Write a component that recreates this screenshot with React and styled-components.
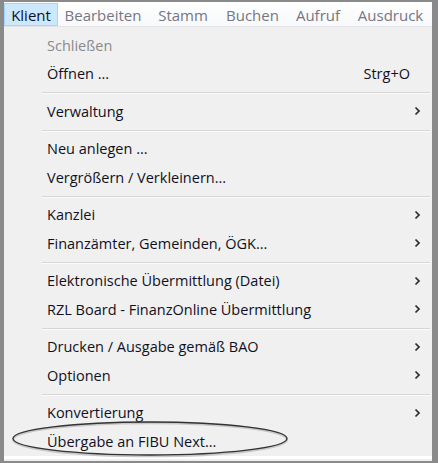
import React from "react";
import styled, { createGlobalStyle } from "styled-components";

const Global = createGlobalStyle`
  html, body { margin: 0; padding: 0; background: #ffffff; }
  body { font-family: "Open Sans", "Noto Sans", "Liberation Sans", sans-serif; }
`;

const Frame = styled.div`
  position: relative;
  box-sizing: border-box;
  width: 438px;
  height: 463px;
  border-style: solid;
  border-color: #8a8a8a;
  border-width: 2px 6px 2px 4px;
  background: #f0f0f0;
  display: flex;
  flex-direction: column;
  overflow: hidden;
`;

const MenuBar = styled.div`
  display: flex;
  align-items: stretch;
  height: 24px;
  background: linear-gradient(#fefefe, #f7f9fc);
  border-bottom: 1px solid #e3e3e3;
`;

const MenuItem = styled.div`
  box-sizing: border-box;
  display: flex;
  align-items: center;
  justify-content: center;
  width: ${(p) => p.$w}px;
  flex: none;
  height: 23px;
  margin-top: 1px;
  font-size: 15px;
  color: ${(p) => (p.$active ? "#101024" : "#767682")};
  background: ${(p) => (p.$active ? "#cce8ff" : "transparent")};
  border: 1px solid ${(p) => (p.$active ? "#a6d4fb" : "transparent")};
  white-space: nowrap;
`;

const Dropdown = styled.div`
  flex: 1;
  display: flex;
  flex-direction: column;
  padding-top: 4px;
  position: relative;
`;

const Row = styled.div`
  display: flex;
  align-items: center;
  height: 28.5px;
  flex: none;
  padding-left: 43px;
  padding-right: 11px;
  font-size: 14.5px;
  color: ${(p) => (p.$disabled ? "#8a8a8a" : "#101024")};
  white-space: nowrap;
`;

const Label = styled.span`
  flex: 1;
`;

const Shortcut = styled.span`
  margin-right: 11px;
`;

const Arrow = styled.svg`
  width: 7px;
  height: 10px;
`;

const Separator = styled.div`
  flex: none;
  height: 9px;
  display: flex;
  align-items: center;
  padding-left: 38px;
  padding-right: 2px;
  &::before {
    content: "";
    flex: 1;
    height: 1px;
    background: #d6d6d6;
    box-shadow: 0 1px 0 #fbfbfb;
  }
`;

const BottomEdge = styled.div`
  margin-top: auto;
  height: 3px;
  background: #ffffff;
  flex: none;
  margin-bottom: 4px;
`;

const Ellipse = styled.svg`
  position: absolute;
  left: 4px;
  top: 389px;
  width: 284px;
  height: 42px;
  pointer-events: none;
`;

const Chevron = () => (
  <Arrow viewBox="0 0 7 10">
    <path d="M1.5 1.5 L5 5 L1.5 8.5" fill="none" stroke="#2a2a2a" strokeWidth="1.7" />
  </Arrow>
);

const menus = [
  { t: "Klient", active: true, w: 54 },
  { t: "Bearbeiten", w: 90 },
  { t: "Stamm", w: 70 },
  { t: "Buchen", w: 69 },
  { t: "Aufruf", w: 62 },
  { t: "Ausdruck", w: 83 },
];

const items = [
  { t: "Schließen", disabled: true },
  { t: "Öffnen ...", sc: "Strg+O" },
  "sep",
  { t: "Verwaltung", sub: true },
  "sep",
  { t: "Neu anlegen ..." },
  { t: "Vergrößern / Verkleinern..." },
  "sep",
  { t: "Kanzlei", sub: true },
  { t: "Finanzämter, Gemeinden, ÖGK...", sub: true },
  "sep",
  { t: "Elektronische Übermittlung (Datei)", sub: true },
  { t: "RZL Board - FinanzOnline Übermittlung", sub: true },
  "sep",
  { t: "Drucken / Ausgabe gemäß BAO", sub: true },
  { t: "Optionen", sub: true },
  "sep",
  { t: "Konvertierung", sub: true },
  { t: "Übergabe an FIBU Next..." },
];

export default function App() {
  return (
    <>
      <Global />
      <Frame>
        <MenuBar>
          {menus.map((m) => (
            <MenuItem key={m.t} $active={m.active} $w={m.w}>
              {m.t}
            </MenuItem>
          ))}
        </MenuBar>
        <Dropdown>
          {items.map((it, i) =>
            it === "sep" ? (
              <Separator key={i} />
            ) : (
              <Row key={i} $disabled={it.disabled}>
                <Label>{it.t}</Label>
                {it.sc && <Shortcut>{it.sc}</Shortcut>}
                {it.sub && <Chevron />}
              </Row>
            )
          )}
          <BottomEdge />
          <Ellipse viewBox="0 0 284 42">
            <ellipse cx="142" cy="23.5" rx="137" ry="16.5" fill="none" stroke="#c8c8c8" strokeWidth="2.5" />
            <ellipse cx="142" cy="22.5" rx="137" ry="16.5" fill="none" stroke="#333333" strokeWidth="1.3" />
          </Ellipse>
        </Dropdown>
      </Frame>
    </>
  );
}
